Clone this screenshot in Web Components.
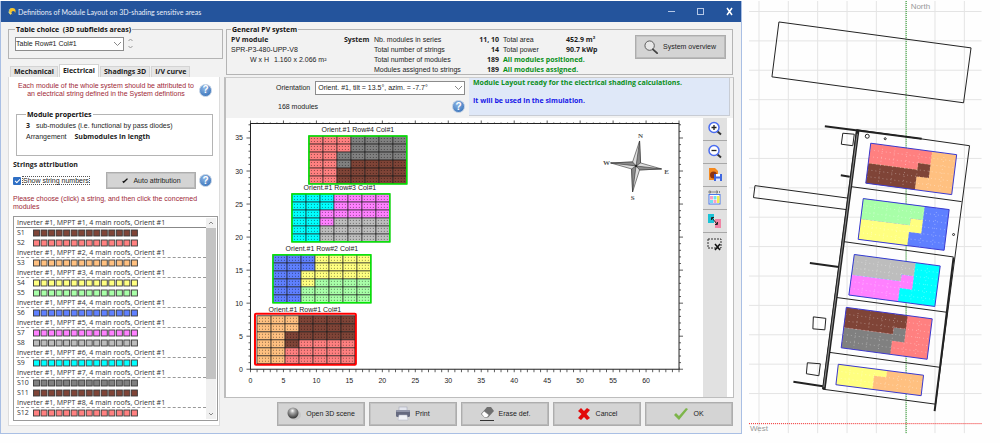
<!DOCTYPE html>
<html lang="en">
<head>
<meta charset="utf-8">
<title>Definitions of Module Layout</title>
<style>
  body { margin: 0; background: #fefefe; font: 7px/8px "Liberation Sans", Arial, sans-serif; color: #1c1c1c; --strong: "Open Sans", "Noto Sans", sans-serif; }
</style>
</head>
<body>
<pv-app></pv-app>
<script>
const BASE = `
  *, *::before, *::after { box-sizing: border-box; }
  button, select, input { font: inherit; color: inherit; margin: 0; }
  b, th { font-weight: 700; font-family: var(--strong); }
  svg { display: block; }
`;
function define(name, markup, setup) {
  const template = document.createElement('template');
  customElements.define(name, class extends HTMLElement {
    connectedCallback() {
      if (this.shadowRoot) return;
      template.innerHTML = `<style>${BASE}</style>` + (typeof markup === 'function' ? markup(this) : markup);
      this.attachShadow({ mode: 'open' }).append(template.content.cloneNode(true));
      if (setup) setup(this);
    }
  });
}
const COLORS = {
  brown: '#7f4437', red: '#ff8080', orange: '#ffc080', yellow: '#ffff80', green: '#a8ffa8',
  blue: '#5f80ff', pink: '#ff80ff', silver: '#bdbdbd', cyan: '#00ffff', grey: '#808080'
};

/* ---------- icons ---------- */
const ICONS = {
  logo: `<path d="M2 6 A4 4 0 0 1 6 1 L6 4 L3 8Z" fill="#5fb4e8"/><circle cx="6" cy="4.500" r="3.500" fill="#f7c52b"/><circle cx="7" cy="6.500" r="2" fill="#24549c"/><path d="M1 5 L4 9 L5 7Z" fill="#f2d96a"/>`,
  check: `<path d="M2 7 L4 9.500 L10.500 3 L9 2 L4 6.500 L3 5.500Z" fill="#111"/>`,
  magnifier: `<circle cx="6" cy="6" r="5" fill="#e6e6e6" stroke="#555" stroke-width="1"/><path d="M9.500 10 L14 14" stroke="#444" stroke-width="2" stroke-linecap="round"/>`,
  sphere: `<ellipse cx="9" cy="9" rx="6" ry="5" fill="#bdbdbd" opacity=".6"/><circle cx="7" cy="7" r="5.500" fill="url(#ball)"/><defs><radialGradient id="ball" cx=".45" cy=".3" r=".7"><stop offset="0" stop-color="#fff"/><stop offset=".3" stop-color="#aaa"/><stop offset="1" stop-color="#333"/></radialGradient></defs>`,
  printer: `<rect x="4" y="1" width="8" height="5" fill="#e4e6ee" stroke="#9a9fb0" stroke-width=".5"/><rect x="1" y="4" width="14" height="7" rx="1.500" fill="#666a80"/><rect x="1" y="4" width="14" height="2" rx="1" fill="#9296aa"/><path d="M4 9 H12 L13 14 H3Z" fill="#f2f3f8" stroke="#b0b4c4" stroke-width=".5"/>`,
  eraser: `<path d="M2 8 L8 1 H12 L15 5 L9 11.500 H6Z" fill="#707070"/><path d="M2.500 8 L5 5 L10 9 L8 11.500 H5.500Z" fill="#fff" stroke="#777" stroke-width=".5"/><path d="M1 14.500 H15" stroke="#333" stroke-width="1"/>`,
  cross: `<path d="M2 5 L5 2 L8 5 L11 2 L14 4 L10.500 8 L14 12 L11 14 L8 11 L5 14 L2 12 L5.500 8Z" fill="#e20a0a"/>`,
  tick: `<path d="M1 9 L3 7 L6 10 L13 2 L15 3 L6 14Z" fill="#7db54a"/>`,
  plus: `<path d="M10 10 L14 13.500" stroke="#333" stroke-width="2"/><circle cx="7" cy="6.500" r="5" fill="#fff" stroke="#4a6cf0" stroke-width="1.500"/><path d="M4.500 6.500 H9.500 M7 4 V9" stroke="#222" stroke-width="1.300"/>`,
  minus: `<path d="M10 10 L14 13.500" stroke="#333" stroke-width="2"/><circle cx="7" cy="6.500" r="5" fill="#fff" stroke="#4a6cf0" stroke-width="1.500"/><path d="M4.500 6.500 H9.500" stroke="#222" stroke-width="1.300"/>`,
  save: `<path d="M2 1 H8 L11 4 V13 H2Z" fill="#f58a1f"/><circle cx="6.500" cy="8" r="3.500" fill="#8c3412"/><rect x="7" y="7" width="8" height="7" fill="#3f67e0"/><rect x="9" y="7" width="4" height="2.500" fill="#fff"/><rect x="9" y="11.500" width="4" height="2.500" fill="#dfe6ff"/>`,
  palette: `<path d="M2 1 h1.500 v2 h-1.500z M5 1 v2 M7 1 v2 M9 1 h1.500 v2 h-1.500z M12.500 1 v2" fill="none" stroke="#666" stroke-width=".7"/><rect x="2" y="4.500" width="11" height="9.500" fill="#fff" stroke="#4a78e8" stroke-width="1"/><rect x="3" y="6" width="3" height="3.500" fill="#f7a0c4"/><rect x="6.500" y="6" width="3" height="3.500" fill="#6fe0ee"/><rect x="10" y="6" width="2.500" height="7" fill="#f2ee50"/><rect x="3" y="10" width="3" height="3" fill="#6fe0ee"/><rect x="6.500" y="10" width="3" height="3" fill="#f7a0c4"/>`,
  swap: `<rect x="1" y="1" width="6" height="9" fill="#19c3d6"/><rect x="8" y="6" width="6" height="9" fill="#f084a4"/><path d="M5 5 L10 11 M4.500 7 V4.500 H7 M8 11.500 H10.500 V9" fill="none" stroke="#222" stroke-width="1"/>`,
  deselect: `<rect x="1" y="3" width="13" height="9" fill="none" stroke="#333" stroke-width="1" stroke-dasharray="2 1"/><path d="M8 8 L13 14 M13 8 L8 14" stroke="#111" stroke-width="1.500"/>`
};
define('pv-icon', host => {
  const size = host.getAttribute('size') || 16;
  return `<style>:host { display: block; flex: none; width: ${size}px; height: ${size}px; }</style>
  <svg viewBox="0 0 ${host.getAttribute('box') || 16} ${host.getAttribute('box') || 16}" width="${size}" height="${size}" aria-hidden="true">${ICONS[host.getAttribute('name')]}</svg>`;
});

/* ---------- small controls ---------- */
define('pv-help', `<style>
  :host { display: block; flex: none; }
  button { display: block; width: 13px; height: 13px; padding: 0; border: 1px solid #b9cbe2; border-radius: 50%;
    background: radial-gradient(circle at 40% 30%, #8bb4e4, #3f78bd 80%); color: #fff; font-size: 10px; line-height: 10px; font-weight: 700; }
</style><button type="button" aria-label="Help">?</button>`);

define('pv-button', host => `<style>
  :host { display: block; }
  button { display: flex; align-items: center; justify-content: center; gap: 4px; width: 100%; height: 100%; padding: 0 3px;
    background: #d4d4d4; border: 1px solid #adadad; box-shadow: inset -1px -1px #bababa, inset 1px 1px #c4c4c4; white-space: nowrap; }
</style><button type="button"><pv-icon name="${host.getAttribute('icon')}" size="${host.getAttribute('size') || 16}" box="${host.getAttribute('box') || 16}"></pv-icon><slot></slot></button>`);

define('pv-select', host => `<style>
  :host { display: flex; align-items: center; gap: 5px; }
  .field { display: grid; flex: 1; align-items: center; }
  select, svg { grid-area: 1 / 1; }
  select { appearance: none; width: 100%; height: 14px; border: 1px solid #8c8c8c; border-radius: 0; background: #fff; padding: 0 12px 0 ${host.getAttribute('inset') || 2}px; }
  svg { justify-self: end; margin-right: 2px; pointer-events: none; }
</style>
${host.hasAttribute('label') ? `<label for="s">${host.getAttribute('label')}</label>` : ''}
<span class="field"><select id="s" ${host.hasAttribute('label') ? '' : 'aria-label="Table choice"'}><option>${host.getAttribute('value')}</option></select>
<svg width="9" height="6" viewBox="0 0 9 6"><path d="M1 1 L4.500 4.500 L8 1" fill="none" stroke="#888"/></svg></span>`);

define('pv-group', host => `<style>
  :host { display: block; }
  fieldset { margin: 0; height: 100%; min-width: 0; border: 1px solid #b4b4b4; padding: var(--group-pad, 1px 7px); }
  legend { padding: 0 1px; font-weight: 700; font-family: var(--strong); line-height: 9px; color: #111; }
</style><fieldset><legend>${host.getAttribute('legend')}</legend><slot></slot></fieldset>`);

/* ---------- title bar ---------- */
define('pv-titlebar', `<style>
  :host { display: flex; align-items: center; height: 21px; padding: 0 7px 0 6px; gap: 1px; background: #24549c; color: #e9effa; }
  h1 { flex: 1; margin: 0 0 0 1px; font-size: 7px; font-weight: 400; font-family: Lato, sans-serif; }
  nav { display: flex; gap: 20px; }
  nav button { width: 9px; height: 9px; padding: 0; border: 0; background: none; }
</style>
<pv-icon name="logo" size="9" box="10"></pv-icon><h1>Definitions of Module Layout on 3D-shading sensitive areas</h1>
<nav><button type="button" aria-label="Minimize"><svg width="9" height="9"><path d="M1 4.500 H8" stroke="#b6c8e6"/></svg></button>
<button type="button" aria-label="Maximize"><svg width="9" height="9"><rect x="1.500" y="1.500" width="6" height="6" fill="none" stroke="#b6c8e6"/></svg></button>
<button type="button" aria-label="Close"><svg width="9" height="9"><path d="M2 1 L7 8 M7 1 L2 8" stroke="#fff" stroke-width="1.500"/></svg></button></nav>`);

/* ---------- list of strings ---------- */
const STRINGS = [['brown', 'red'], ['orange'], ['yellow', 'green'], ['blue'], ['pink', 'silver'], ['cyan'], ['grey', 'brown'], ['red']];
const swatches = color => `<svg width="105" height="8" viewBox="0 0 105 8" aria-hidden="true"><g fill="${color}" stroke="#3a3a3a" stroke-width=".9">` +
  Array.from({ length: 14 }, (_, i) => `<rect x="${(0.5 + i * 7.53).toFixed(2)}" y="1" width="6" height="6"/>`).join('') + '</g></svg>';
define('pv-string-list', () => {
  let n = 0;
  const rows = STRINGS.map((set, i) => `<li class="head">Inverter #1, MPPT #${i + 1}, 4 main roofs, Orient #1</li>` +
    set.map(c => `<li><span>S${++n}</span>${swatches(COLORS[c])}</li>`).join('')).join('');
  return `<style>
  :host { display: flex; border: 1px solid #9a9a9a; background: #fff; padding: 1px; }
  ul { flex: 1; margin: 0; padding: 0 0 1px 1px; list-style: none; color: #333; font-family: "Open Sans", sans-serif; }
  li { display: flex; align-items: center; height: 10px; padding-left: 1px; }
  .head { border-bottom: 1px dashed #999; white-space: nowrap; }
  .head:first-child { border-bottom: 1px solid #888; }
  span { width: 16px; }
  .bar { display: flex; flex-direction: column; align-items: center; width: 10px; background: #f0f0f0; }
  .bar svg { height: 10px; flex: none; }
  .thumb { width: 100%; flex: 1; margin-bottom: 30px; background: #c3c3c3; }
  </style><ul>${rows}</ul><div class="bar"><svg width="8" height="10"><path d="M2 6 L4 4 L6 6" fill="none" stroke="#888"/></svg>
  <div class="thumb"></div><svg width="8" height="10"><path d="M2 4 L4 6 L6 4" fill="none" stroke="#888"/></svg></div>`;
});

/* ---------- left column ---------- */
define('pv-sidebar', `<style>
  :host { display: flex; flex-direction: column; }
  .choice { height: 34px; --group-pad: 3px 6px; }
  .pick { display: flex; align-items: center; gap: 3px; }
  .pick pv-select { width: 109px; }
  .tabs { display: flex; align-items: flex-end; gap: 1px; height: 13px; margin-top: 5px; padding-left: 2px; }
  .tabs button { height: 11px; padding: 0 3px; border: 1px solid #d4d4d4; border-bottom: 0; background: #e6e6e6; font-weight: 700; font-family: var(--strong); white-space: nowrap; }
  .tabs button[aria-selected=true] { height: 13px; background: #fff; }
  .panel { display: flex; flex-direction: column; flex: 1; margin-right: 3px; padding: 5px 1px 4px 4px; background: #fff; border: 1px solid #dcdcdc; border-top: 0; }
  .note { color: #a02838; margin: 0; }
  .intro { display: flex; align-items: center; padding-right: 6px; }
  .intro .note { flex: 1; text-align: center; }
  .props { height: 46px; margin: 12px 5px 0 3px; --group-pad: 3px 9px; }
  .props p { margin: 0 0 3px; }
  .props b { margin-right: 4px; line-height: 8px; }
  .props .wide { margin-left: 6px; }
  h2 { margin: 5px 0 0; font-size: 7px; line-height: 8px; font-family: var(--strong); }
  .row { display: flex; align-items: center; gap: 3px; margin-top: 3px; padding-right: 6px; }
  label { display: flex; align-items: center; gap: 1px; flex: 1; }
  label span { border: 1px dotted #555; line-height: 7px; white-space: nowrap; }
  input { appearance: none; width: 8px; height: 8px; border-radius: 1px; background: #2f6fc4; display: grid; place-items: center; }
  input:checked::after { content: ""; width: 5px; height: 3px; border: solid #fff; border-width: 0 0 1px 1px; transform: rotate(-45deg); }
  .row pv-button { width: 90px; height: 17px; }
  .hint { margin: 6px 0 5px; line-height: 8px; padding-right: 14px; }
</style>
<pv-group class="choice" legend="Table choice&nbsp; (3D subfields areas)"><div class="pick">
  <pv-select value="Table Row#1 Col#1" inset="0"></pv-select>
  <svg width="7" height="14" viewBox="0 0 7 14"><path d="M1.500 4 L3.500 2 L5.500 4 M1.500 9 L3.500 11 L5.500 9" fill="none" stroke="#999"/></svg></div></pv-group>
<div class="tabs" role="tablist"><button role="tab">Mechanical</button><button role="tab" aria-selected="true">Electrical</button><button role="tab">Shadings 3D</button><button role="tab">I/V curve</button></div>
<section class="panel">
  <div class="intro"><p class="note">Each module of the whole system should be attributed to<br>an electrical string defined in the System defintions</p><pv-help></pv-help></div>
  <pv-group class="props" legend="Module properties"><p><b>3</b> sub-modules (i.e. functional by pass diodes)</p><p>Arrangement <b class="wide">Submodules in length</b></p></pv-group>
  <h2>Strings attribution</h2>
  <div class="row"><label><input type="checkbox" checked><span>Show string numbers</span></label>
  <pv-button icon="check" size="8" box="12">Auto attribution</pv-button><pv-help></pv-help></div>
  <p class="note hint">Please choose (click) a string, and then click the concerned modules</p>
  <pv-string-list></pv-string-list>
</section>`);

/* ---------- system summary ---------- */
define('pv-summary', `<style>
  :host { display: block; --group-pad: 1px 6px 0 4px; }
  pv-group { height: 50px; }
  .line { display: flex; align-items: flex-start; }
  .line > * { line-height: 10px; }
  .module { width: 113px; flex: none; }
  .module p { margin: 0; }
  .size { padding-left: 19px; }
  .size span { margin-left: 3px; }
  .name { width: 30px; flex: none; }
  table { border-collapse: collapse; flex: none; }
  td { padding: 0; height: 10px; line-height: 10px; white-space: nowrap; }
  .label { width: 92px; }
  .num { width: 33px; text-align: right; font-weight: 700; font-family: var(--strong); }
  .what { width: 67px; padding-left: 4px; }
  .good { color: #0a8f1a; font-weight: 700; font-family: var(--strong); padding-left: 4px; }
  pv-button { width: 91px; height: 24px; margin-left: auto; }
</style>
<pv-group legend="General PV system"><div class="line">
  <div class="module"><p><b>PV module</b></p><p>SPR-P3-480-UPP-V8</p><p class="size">W x H <span>1.160 x 2.066 m²</span></p></div>
  <b class="name">System</b>
  <table>
    <tr><td class="label">Nb. modules in series</td><td class="num">11, 10</td><td class="what">Total area</td><td><b>452.9 m²</b></td></tr>
    <tr><td>Total number of strings</td><td class="num">14</td><td class="what">Total power</td><td><b>90.7 kWp</b></td></tr>
    <tr><td>Total number of modules</td><td class="num">189</td><td class="good" colspan="2">All modules positioned.</td></tr>
    <tr><td>Modules assigned to strings</td><td class="num">189</td><td class="good" colspan="2">All modules assigned.</td></tr>
  </table>
  <pv-button icon="magnifier" size="15" box="16">System overview</pv-button>
</div></pv-group>`);

/* ---------- plot of the tables ---------- */
const TABLES = [
  { x: 309, y: 136, name: 'Row#4', lx: 358, c: ['red', 'grey', 'brown'] },
  { x: 292, y: 194, name: 'Row#3', lx: 340, c: ['cyan', 'pink', 'silver'] },
  { x: 273, y: 255, name: 'Row#2', lx: 322, c: ['blue', 'yellow', 'green'] },
  { x: 257, y: 316, name: 'Row#1', lx: 305, c: ['orange', 'brown', 'red'], picked: true }
];
const CELLS = ['0001111', '0001111', '0011111', '0012222', '0022222', '0022222'];
function plot() {
  let s = '';
  const X = v => 250.5 + v * 6.6, Y = v => 369.5 - v * 6.614;
  let ticks = '';
  for (let v = 0; v <= 65; v++) { const l = v % 5 ? 2 : 4; ticks += `M${X(v)} ${369.5 - (v % 5 ? 0 : 2)}v${l + 1}M${X(v)} 123.500v-${l - 1}`; }
  for (let v = 0; v <= 37; v++) { const l = v % 5 ? 2 : 4; ticks += `M250.500 ${Y(v)}h-${l}M679.500 ${Y(v)}h${l}`; }
  s += `<path d="${ticks}" stroke="#333" stroke-width=".8"/><rect x="250.500" y="123.500" width="429" height="246" fill="#fff" stroke="#222"/>`;
  for (let v = 0; v <= 60; v += 5) s += `<text x="${X(v)}" y="383" text-anchor="middle">${v}</text>`;
  for (let v = 0; v <= 35; v += 5) s += `<text x="243" y="${Y(v) + 2.5}" text-anchor="end">${v}</text>`;
  for (const t of TABLES) {
    const w = 14, h = 8;
    let grid = '', dots = '';
    CELLS.forEach((row, r) => [...row].forEach((k, c) => s += `<rect x="${t.x + c * w}" y="${t.y + r * h}" width="${w}" height="${h}" fill="${COLORS[t.c[k]]}"/>`));
    for (let c = 1; c < 7; c++) grid += `M${t.x + c * w} ${t.y}v48`;
    for (let r = 1; r < 6; r++) grid += `M${t.x} ${t.y + r * h}h98`;
    for (let r = 0; r < 6; r++) dots += `M${t.x + 2} ${t.y + r * h + 2.5}h94M${t.x + 2} ${t.y + r * h + 5.5}h94`;
    s += `<path d="${dots}" stroke="#000" stroke-opacity=".45" stroke-width="1" stroke-dasharray="1 2 1 2 1 2 1 4"/><path d="${grid}" stroke="#111" stroke-opacity=".9" stroke-width=".9"/>`;
    s += `<rect x="${t.x}" y="${t.y}" width="98" height="48" fill="none" stroke="#222" stroke-width=".8"/>`;
    s += t.picked ? `<rect x="${t.x - 2}" y="${t.y - 2}" width="101" height="51" rx="1" fill="none" stroke="#f00" stroke-width="2"/>`
                  : `<rect x="${t.x}" y="${t.y}" width="98" height="48" fill="none" stroke="#0e0" stroke-width="1.500"/>`;
    s += `<text x="${t.lx}" y="${t.y - 4}" text-anchor="middle">Orient.#1 ${t.name} Col#1</text>`;
  }
  s += `<g stroke="#333" stroke-width=".6" stroke-linejoin="round"><path d="M640 141 L641 163 L662 169 L640 170 L633 192 L632 169 L611 163 L633 162Z" fill="#ddd"/>
    <path d="M640 141 L641 163 L636.500 166Z M662 169 L640 170 L636.500 166Z M633 192 L632 169 L636.500 166Z M611 163 L633 162 L636.500 166Z" fill="#8a8a8a"/><circle cx="636.500" cy="166" r="1" fill="#111"/></g>
    <g class="rose" text-anchor="middle"><text x="641" y="138">N</text><text x="607" y="165">W</text><text x="667" y="174">E</text><text x="633" y="200">S</text></g>`;
  return s;
}
define('pv-plot', () => `<style>:host { display: block; background: #fff; }
  text { font-size: 7px; fill: #222; } .rose text { font-family: "Liberation Serif", serif; font-weight: 700; fill: #555; }</style>
  <svg width="100%" viewBox="226 118 477 279" role="img" aria-label="Module layout">${plot()}</svg>`);

define('pv-tools', `<style>
  :host { display: flex; flex-direction: column; width: 24px; background: #e1e1e1; }
  button { display: grid; place-items: center; height: 22px; padding: 0; border: 0; background: none; }
  button + button { height: 23px; border-top: 1px solid #a8a8a8; }
</style>` + [['plus', 'Zoom in'], ['minus', 'Zoom out'], ['save', 'Save picture'], ['palette', 'Colors'], ['swap', 'Swap'], ['deselect', 'Clear selection']]
  .map(([i, l]) => `<button type="button" aria-label="${l}"><pv-icon name="${i}"></pv-icon></button>`).join(''));

define('pv-layout', `<style>
  :host { display: block; border: 1px solid #bdbdbd; border-left-width: 2px; border-top-color: #ccc; }
  header { display: flex; justify-content: space-between; height: 38px; margin-right: 3px; }
  .orient { flex: none; width: 189px; margin-left: 50px; padding-top: 3px; }
  .count { display: flex; align-items: center; justify-content: space-between; height: 13px; margin: 5px 0 0 2px; }
  .status { flex: 1; margin-left: 4px; padding: 1px 4px; background: #dfe8f8; border: 1px solid #c8ccd4; border-width: 0 1px 1px 0; font-weight: 700; font-family: var(--strong); }
  .status p { margin: 0 0 10px; }
  .ready { color: #0a8f1a; } .used { color: #1616e8; }
  .stage { display: flex; margin-top: 2px; padding-right: 6px; background: #fff; }
  pv-plot { flex: 1; min-width: 0; }
</style>
<header><div class="orient"><pv-select label="Orientation" value="Orient. #1, tilt = 13.5°, azim. = -7.7°"></pv-select><div class="count"><span>168 modules</span><pv-help></pv-help></div></div>
<div class="status"><p class="ready">Module Layout ready for the electrical shading calculations.</p><p class="used">It will be used in the simulation.</p></div></header>
<div class="stage"><pv-plot></pv-plot><pv-tools></pv-tools></div>`);

/* ---------- dialog window ---------- */
define('pv-window', `<style>
  :host { display: block; margin-top: 1px; border: 1px solid #a9bfe4; border-top: 0; background: #f2f2f2; }
  .body { display: flex; gap: 1px; padding: 3px 7px 7px; }
  pv-sidebar { width: 215px; flex: none; }
  main { flex: 1; min-width: 0; display: flex; flex-direction: column; }
  pv-summary { margin: 0 1px 2px 2px; }
  footer { display: flex; justify-content: flex-end; gap: 4px; margin-top: 4px; padding-right: 1px; }
  footer pv-button { width: 88px; height: 24px; }
</style>
<pv-titlebar></pv-titlebar>
<div class="body"><pv-sidebar></pv-sidebar><main><pv-summary></pv-summary><pv-layout></pv-layout>
<footer><pv-button icon="sphere">Open 3D scene</pv-button><pv-button icon="printer">Print</pv-button><pv-button icon="eraser">Erase def.</pv-button><pv-button icon="cross">Cancel</pv-button><pv-button icon="tick">OK</pv-button></footer></main></div>`);

/* ---------- 3D scene seen from above ---------- */
const ROOFS = [
  { m: [12.3, 1.64, -0.83, 6.67, 871, 143.5], c: ['red', 'brown', 'orange'] },
  { m: [12.3, 1.57, -0.85, 6.8, 863.5, 199], c: ['green', 'yellow', 'blue'] },
  { m: [12.3, 1.64, -0.9, 6.77, 854.5, 255], c: ['silver', 'pink', 'cyan'] },
  { m: [12.3, 1.64, -0.85, 6.75, 846.5, 308], c: ['brown', 'grey', 'red'] },
  { m: [12.2, 1.57, -0.8, 6.83, 838.5, 365], c: ['yellow', 'orange'], rows: 3 }
];
function scene() {
  let grid = '', s = '';
  for (let i = 0; i < 8; i++) grid += `M${759 + i * 29.4} 1V434`;
  for (let i = 0; i < 14; i++) grid += `M749 ${11.5 + i * 29.45}H982`;
  s += `<path d="${grid}" stroke="#e4e4e4"/><path d="M906.500 1V434" stroke="#149414" stroke-dasharray="1 1"/><path d="M749 424.500H982" stroke="#f02020" stroke-dasharray="1 1"/>`;
  s += `<g fill="none" stroke="#222"><path d="M779 22 L971.500 48 L964 103 L772 77Z"/>
    <path d="M848 198.500 L755 186 L753.500 198 L846.500 210"/><path d="M857 130 L970 146 L936 405 L823 390Z"/>
    <path d="M851 187 L962 202 M843 242 L954 257.500 M836 298 L948 313 M829 353 L940 368"/>
    <path d="M858 130 L824 390" stroke-width="3.500"/><path d="M825 126.500 L922 139" stroke-width="2"/><path d="M954 258 L935 412" stroke-width="2"/>
    <path d="M841 175.500 L850 177 M810 263.500 L839 267.500 M793.500 382.500 L823 387" stroke-width="2"/>
    <path d="M857.500 134 L824 388" stroke="#aaa" stroke-width=".8"/>
    <path d="M843 133.500 L854.500 134.500 L853 146 L841.500 144.500Z M813.500 317.500 L826 319 L825 330.500 L813 329.500Z M807.500 363.500 L820.500 364.500 L819 376.500 L806.500 374.500Z"/>
    <circle cx="867.500" cy="136.500" r="2"/><circle cx="885.500" cy="139" r="1"/><circle cx="954" cy="235" r="1"/></g>`;
  for (const r of ROOFS) {
    const n = r.rows || 6, k = r.c.map(c => COLORS[c]);
    s += `<g transform="matrix(${r.m})"><rect width="7" height="${n}" fill="${k[k.length - 1]}"/>`;
    s += n === 3 ? `<path d="M0 0H4V1H3V3H0Z" fill="${k[0]}"/>` : `<path d="M0 0H5V2H4V3H0Z" fill="${k[0]}"/><path d="M0 3H4V2H5V4H4V6H0Z" fill="${k[1]}"/>`;
    let d = ''; for (let i = 1; i < n; i++) d += `M0 ${i}H7`; for (let i = 1; i < 7; i++) d += `M${i} 0V${n}`;
    s += `<path d="${d}" fill="none" stroke="#fff" stroke-opacity=".55" stroke-width=".6" stroke-dasharray="1 3" vector-effect="non-scaling-stroke"/>
      <rect width="7" height="${n}" fill="none" stroke="#3a3ad0" stroke-width="1" vector-effect="non-scaling-stroke"/></g>`;
  }
  return s + `<text x="911" y="9">North</text><text x="750" y="432">West</text>`;
}
define('pv-scene', () => `<style>:host { display: block; } text { font-size: 8px; fill: #999; }</style>
  <svg width="100%" viewBox="742 0 259 443" role="img" aria-label="Plan of the 3D scene">${scene()}</svg>`);

define('pv-app', `<style>
  :host { display: flex; align-items: flex-start; }
  pv-window { flex: 741 1 0; min-width: 0; } pv-scene { flex: 259 1 0; min-width: 0; }
</style><pv-window></pv-window><pv-scene></pv-scene>`);
</script>
</body>
</html>
